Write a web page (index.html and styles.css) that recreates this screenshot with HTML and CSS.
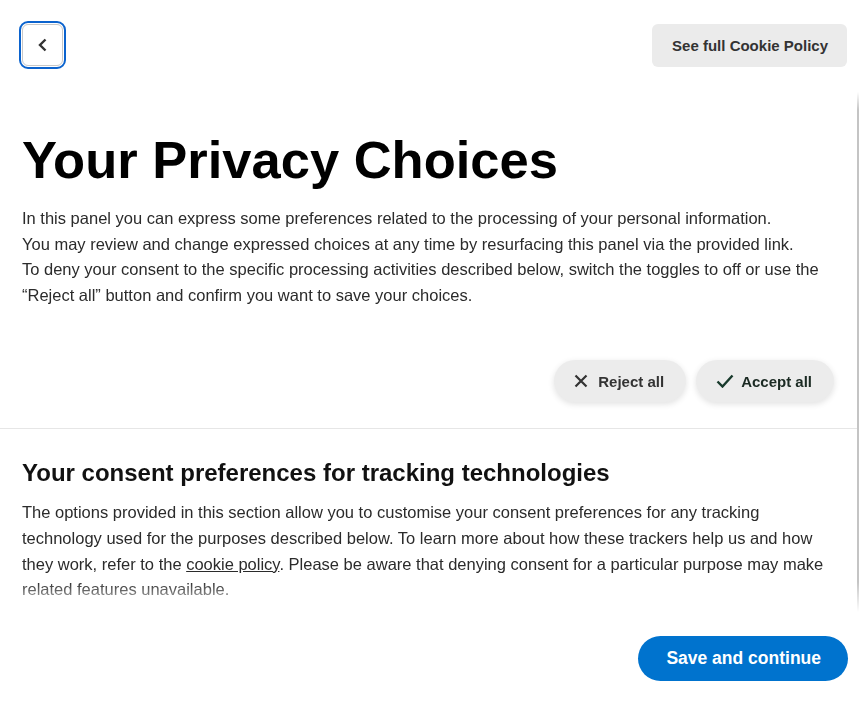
FILE: index.html
```html
<!DOCTYPE html>
<html lang="en">
<head>
    <meta charset="UTF-8">
    <meta name="viewport" content="width=device-width, initial-scale=1.0">
    <title>Your Privacy Choices</title>
    <link rel="stylesheet" href="styles.css">
</head>
<body>
    <div class="prefs">
        <!-- Top bar: back + cookie policy -->
        <div class="prefs-header">
            <button class="back-btn" aria-label="Back">
                <svg width="16" height="16" viewBox="0 0 16 16"><path d="M10.5 2.5 5 8l5.5 5.5" fill="none" stroke="#333" stroke-width="2.4"/></svg>
            </button>
            <button class="policy-btn">See full Cookie Policy</button>
        </div>

        <div class="prefs-scroll">
            <div class="prefs-section intro">
                <h1>Your Privacy Choices</h1>
                <p>In this panel you can express some preferences related to the processing of your personal information.<br>
                You may review and change expressed choices at any time by resurfacing this panel via the provided link.<br>
                To deny your consent to the specific processing activities described below, switch the toggles to off or use the “Reject all” button and confirm you want to save your choices.</p>

                <div class="bulk-actions">
                    <button class="pill-btn">
                        <svg width="14" height="14" viewBox="0 0 14 14"><path d="M1.5 1.5l11 11M12.5 1.5l-11 11" stroke="#333" stroke-width="2.2"/></svg>
                        Reject all
                    </button>
                    <button class="pill-btn accept">
                        <svg width="18" height="14" viewBox="0 0 18 14"><path d="M1.5 7.5l5 5L16.5 1.5" fill="none" stroke="#183a2c" stroke-width="2.4"/></svg>
                        Accept all
                    </button>
                </div>
            </div>

            <div class="prefs-section tracking">
                <h2>Your consent preferences for tracking technologies</h2>
                <p>The options provided in this section allow you to customise your consent preferences for any tracking technology used for the purposes described below. To learn more about how these trackers help us and how they work, refer to the <a href="#">cookie policy</a>. Please be aware that denying consent for a particular purpose may make related features unavailable.</p>
            </div>
        </div>

        <div class="prefs-footer">
            <button class="save-btn">Save and continue</button>
        </div>
    </div>
</body>
</html>
```

FILE: styles.css
```css
/* Reset */
* {
    box-sizing: border-box;
    margin: 0;
    padding: 0;
}
body {
    background: #fff;
    font-family: "Liberation Sans", Arial, sans-serif;
    color: #2b2b2b;
}
button {
    font-family: inherit;
    cursor: pointer;
}
/* Panel */
.prefs {
    width: 860px;
    height: 710px;
    display: flex;
    flex-direction: column;
}
.prefs-header {
    height: 92px;
    display: flex;
    justify-content: space-between;
    align-items: flex-start;
    padding: 24px 13px 0 22px;
}
.back-btn {
    width: 41px;
    height: 42px;
    background: #fff;
    border: 1px solid #c8c8c8;
    border-radius: 6px;
    outline: 2px solid #0b63ce;
    outline-offset: 1px;
    display: flex;
    align-items: center;
    justify-content: center;
}
.policy-btn {
    height: 43px;
    padding: 0 19px 0 20px;
    background: #ebebeb;
    border: none;
    border-radius: 6px;
    font-size: 15px;
    font-weight: bold;
    color: #333;
}
/* Scrolling content (thin track drawn as right border) */
.prefs-scroll {
    flex: 1;
    overflow-y: auto;
    border-right: 2px solid #c4c4c4;
    margin-right: 1px;
    -webkit-mask-image: linear-gradient(to bottom, transparent 0, #000 18px, #000 calc(100% - 30px), transparent 100%);
    mask-image: linear-gradient(to bottom, transparent 0, #000 18px, #000 calc(100% - 30px), transparent 100%);
}
.prefs-section {
    padding: 0 23px 0 22px;
}
.intro {
    padding-top: 38px;
    padding-bottom: 26px;
    border-bottom: 1px solid #e6e6e6;
}
.intro h1 {
    font-size: 52.5px;
    line-height: 60px;
    color: #000;
    margin-bottom: 16px;
}
.prefs-section p {
    font-size: 16.5px;
    line-height: 25.6px;
}
.bulk-actions {
    display: flex;
    justify-content: flex-end;
    gap: 10px;
    margin-top: 52px;
}
.pill-btn {
    height: 42px;
    display: flex;
    align-items: center;
    gap: 10px;
    padding: 0 22px 0 20px;
    background: #ececec;
    border: none;
    border-radius: 21px;
    box-shadow: 0 2px 6px rgba(0, 0, 0, 0.12);
    font-size: 15px;
    font-weight: bold;
    color: #333;
}
.pill-btn.accept {
    gap: 7px;
    padding-left: 20px;
    color: #1b2a23;
}
.tracking {
    padding-top: 30px;
    padding-bottom: 40px;
}
.tracking h2 {
    font-size: 24px;
    line-height: 28px;
    color: #111;
    margin-bottom: 13px;
}
.tracking a {
    color: inherit;
}
/* Footer */
.prefs-footer {
    height: 98px;
    display: flex;
    justify-content: flex-end;
    align-items: flex-start;
    padding: 24px 12px 0 0;
}
.save-btn {
    height: 45px;
    padding: 0 27px 0 28px;
    background: #0073ce;
    border: none;
    border-radius: 23px;
    color: #fff;
    font-size: 17.5px;
    font-weight: bold;
}
```
